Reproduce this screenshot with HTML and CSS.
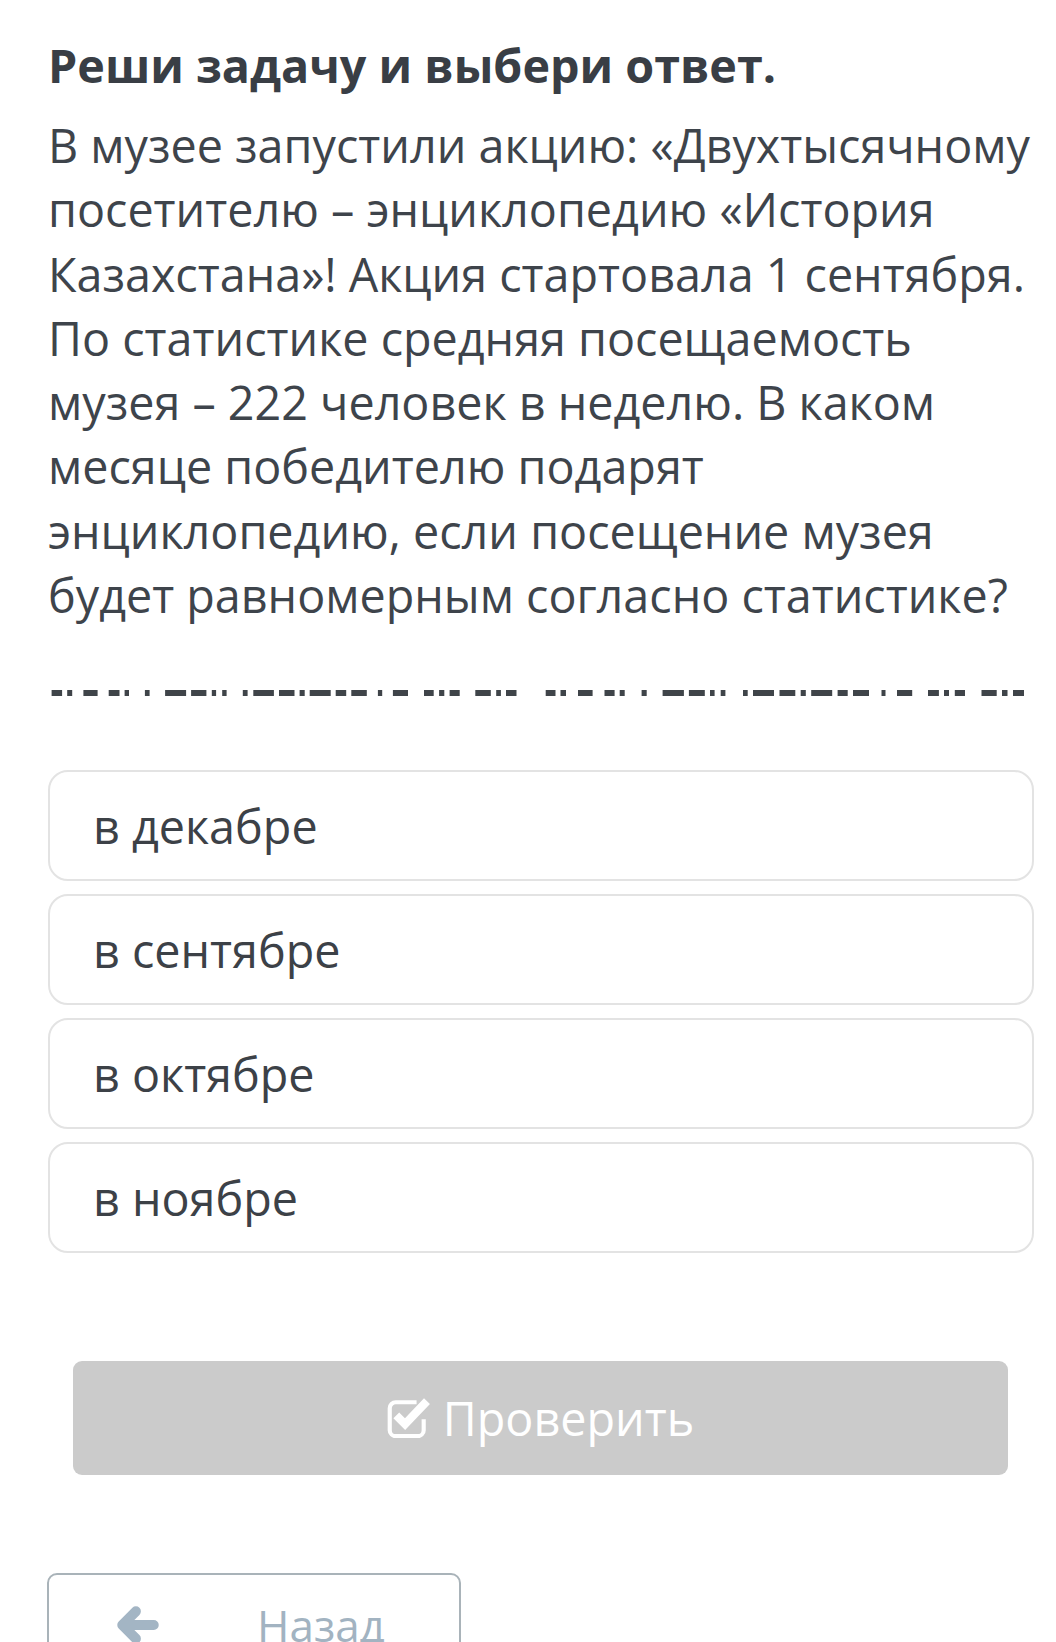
FILE: index.html
```html
<!DOCTYPE html>
<html lang="ru">
<head>
<meta charset="utf-8">
<title>Реши задачу</title>
<link rel="stylesheet" href="styles.css">
</head>
<body>
<main class="page">
  <h1 class="title">Реши задачу и выбери ответ.</h1>
  <p class="question">В музее запустили акцию: «Двухтысячному<br>посетителю – энциклопедию «История<br>Казахстана»! Акция стартовала 1 сентября.<br>По статистике средняя посещаемость<br>музея – 222 человек в неделю. В каком<br>месяце победителю подарят<br>энциклопедию, если посещение музея<br>будет равномерным согласно статистике?</p>

  <svg class="blank" width="986" height="6" viewBox="0 0 986 6" aria-hidden="true">
    <g fill="#3f4449">
      <rect x="3.6" y="0" width="10.5" height="6"/><rect x="19.2" y="0" width="5" height="6"/><rect x="35.4" y="0" width="14.2" height="6"/><rect x="60.7" y="0" width="10.8" height="6"/><rect x="76.6" y="0" width="4.4" height="6"/><rect x="96.9" y="0" width="4.7" height="6"/><rect x="117.1" y="0" width="21" height="6"/><rect x="143.1" y="0" width="15.3" height="6"/><rect x="163.8" y="0" width="4.3" height="6"/><rect x="174.2" y="0" width="4.4" height="6"/><rect x="194.8" y="0" width="4.8" height="6"/><rect x="205.3" y="0" width="20.6" height="6"/><rect x="231" y="0" width="15.5" height="6"/><rect x="251.6" y="0" width="5.1" height="6"/><rect x="261.7" y="0" width="21" height="6"/><rect x="287.7" y="0" width="10.5" height="6"/><rect x="303.3" y="0" width="15.5" height="6"/><rect x="329.9" y="0" width="4.3" height="6"/><rect x="344.9" y="0" width="15.1" height="6"/><rect x="376" y="0" width="9.7" height="6"/><rect x="391.1" y="0" width="5.2" height="6"/><rect x="401.6" y="0" width="10.1" height="6"/><rect x="427.3" y="0" width="15.5" height="6"/><rect x="448.2" y="0" width="4.7" height="6"/><rect x="458" y="0" width="10.5" height="6"/>
      <rect x="497.7" y="0" width="9.8" height="6"/><rect x="512.5" y="0" width="5.5" height="6"/><rect x="530" y="0" width="14.6" height="6"/><rect x="556.5" y="0" width="10.1" height="6"/><rect x="571.7" y="0" width="5" height="6"/><rect x="593.6" y="0" width="5.1" height="6"/><rect x="614.6" y="0" width="21.3" height="6"/><rect x="640.9" y="0" width="15.9" height="6"/><rect x="662" y="0" width="4.6" height="6"/><rect x="672.7" y="0" width="4.7" height="6"/><rect x="695" y="0" width="4.7" height="6"/><rect x="705" y="0" width="21" height="6"/><rect x="731.5" y="0" width="15.8" height="6"/><rect x="752.7" y="0" width="5.1" height="6"/><rect x="763.2" y="0" width="21" height="6"/><rect x="789.6" y="0" width="10.1" height="6"/><rect x="805" y="0" width="16" height="6"/><rect x="833.5" y="0" width="4" height="6"/><rect x="849" y="0" width="15.2" height="6"/><rect x="880" y="0" width="10.9" height="6"/><rect x="896" y="0" width="5" height="6"/><rect x="906.8" y="0" width="10.2" height="6"/><rect x="933.5" y="0" width="15.2" height="6"/><rect x="954" y="0" width="5.5" height="6"/><rect x="965" y="0" width="11" height="6"/>
    </g>
  </svg>

  <ul class="options">
    <li class="option">в декабре</li>
    <li class="option">в сентябре</li>
    <li class="option">в октябре</li>
    <li class="option">в ноябре</li>
  </ul>

  <button class="check" type="button">
    <svg class="check-icon" width="46" height="42" viewBox="0 0 42 38" aria-hidden="true">
      <path d="M27 5.5 H8 a5.5 5.5 0 0 0 -5.5 5.5 v20 a5.5 5.5 0 0 0 5.5 5.5 h20 a5.5 5.5 0 0 0 5.5 -5.5 v-10" fill="none" stroke="#ffffff" stroke-width="3.8"/>
      <path d="M8.5 17.5 L16.5 25.5 L36.5 4.5" fill="none" stroke="#ffffff" stroke-width="7.5" stroke-linejoin="miter"/>
    </svg>
    <span>Проверить</span>
  </button>

  <button class="back" type="button">
    <svg class="back-icon" width="42" height="38" viewBox="0 0 40 36" aria-hidden="true">
      <path d="M18 5 L5 18 L18 31 M6 18 H35" fill="none" stroke="#a3b5c4" stroke-width="9.5" stroke-linecap="round" stroke-linejoin="round"/>
    </svg>
    <span>Назад</span>
  </button>
</main>
</body>
</html>
```

FILE: styles.css
```css
html, body {
  margin: 0;
  padding: 0;
  background: #ffffff;
}

body {
  font-family: "Open Sans", "Noto Sans", sans-serif;
  color: #3d4249;
}

.page {
  padding: 41px 22px 0 48px;
}

.title {
  margin: 0;
  font-size: 46.7px;
  line-height: 48px;
  font-weight: 700;
  color: #393e45;
}

.question {
  margin: 24px 0 0 0;
  font-size: 46.7px;
  line-height: 64.3px;
  white-space: nowrap;
  color: #3e444b;
}

.blank {
  display: block;
  margin-top: 63px;
}

.options {
  list-style: none;
  margin: 74px 0 0 0;
  padding: 0;
  display: flex;
  flex-direction: column;
  gap: 13px;
}

.option {
  box-sizing: border-box;
  height: 111px;
  border: 2px solid #e3e3e3;
  border-radius: 20px;
  padding-left: 43px;
  display: flex;
  align-items: center;
  font-size: 46.7px;
  color: #3c4147;
}

.check {
  box-sizing: border-box;
  display: flex;
  align-items: center;
  justify-content: center;
  gap: 10px;
  width: calc(100% - 51px);
  height: 114px;
  margin: 108px 26px 0 25px;
  border: none;
  border-radius: 9px;
  background: #cbcbcb;
  color: #ffffff;
  font-family: "Open Sans", "Noto Sans", sans-serif;
  font-size: 46.7px;
  padding: 0;
}

.check-icon {
  display: block;
  margin-top: -2px;
}

.back {
  box-sizing: border-box;
  display: flex;
  align-items: center;
  width: 414px;
  height: 104px;
  margin: 98px 0 0 -1px;
  padding: 0 0 0 68px;
  gap: 98px;
  border: 2px solid #a9b3b9;
  border-radius: 10px;
  background: #ffffff;
  color: #a2b3c1;
  font-family: "Open Sans", "Noto Sans", sans-serif;
  font-size: 44px;
}

.back-icon {
  display: block;
}
```
